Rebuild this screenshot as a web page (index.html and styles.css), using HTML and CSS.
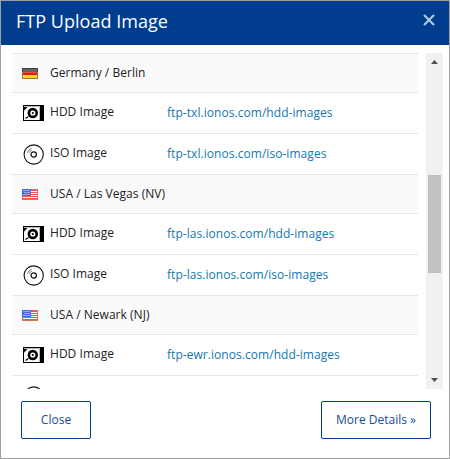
FILE: index.html
```html
<!DOCTYPE html>
<html lang="en">
<head>
<meta charset="utf-8">
<title>FTP Upload Image</title>
<link rel="stylesheet" href="styles.css">
</head>
<body>
<svg class="defs" aria-hidden="true">
  <symbol id="hdd" viewBox="0 0 21 16">
    <rect width="21" height="16" fill="#000"/>
    <path d="M5.5 1H17V15H1V5.5Z" fill="#fff"/>
    <path d="M16.5 1V15M1 1.5H17" stroke="#bbb"/>
    <circle cx="9.8" cy="8" r="3.9" fill="#fff" stroke="#000" stroke-width="2.6"/>
    <circle cx="9.8" cy="8" r="1.1" fill="#000"/>
    <path d="M2.5 13.5 5.5 11.5" stroke="#000" stroke-width="1.2"/>
  </symbol>
  <symbol id="iso" viewBox="0 0 21 21">
    <g fill="none" stroke="#111">
      <circle cx="10.7" cy="10.5" r="9.6" stroke-width="1.1"/>
      <circle cx="10.7" cy="10.5" r="2.7" stroke-width="1.2"/>
      <path d="M4.3 8.8A6.6 6.6 0 0 1 8.6 4.4M6.2 8.8A5 5 0 0 1 8.8 6.2" stroke="#777" stroke-width="1"/>
    </g>
  </symbol>
  <symbol id="de" viewBox="0 0 16 11">
    <rect width="16" height="11" fill="#9c7732"/>
    <path d="M0 0H16V4H0Z" fill="#4a3b36"/>
    <path d="M1 1H15V4H1Z" fill="#666"/>
    <path d="M1 4H15V7H1Z" fill="#e01c1c"/>
    <path d="M1 4H15V5H1Z" fill="#ee4a40"/>
    <path d="M1 7H15V10H1Z" fill="#ffd22c"/>
  </symbol>
  <symbol id="us" viewBox="0 0 16 11">
    <rect width="16" height="11" fill="#d9705c"/>
    <path d="M1 1H15V10H1Z" fill="#fff"/>
    <path d="M9 1.5H15M9 3.5H15M9 5.5H15M1 7.5H15M1 9.5H15" stroke="#f4524a"/>
    <path d="M0 0H9V7H0Z" fill="#3f6fe0"/>
    <path d="M1.5 1.5H8M2.5 3.5H8M1.5 5.5H8" stroke="#dce6ff" stroke-dasharray="1 1"/>
  </symbol>
</svg>
<div class="dialog">
  <header class="dialog-header">
    <h1 class="title">FTP Upload Image</h1>
    <svg class="close-icon" viewBox="0 0 12 12"><path d="M1 1 11 11M11 1 1 11"/></svg>
  </header>
  <div class="body">
    <div class="list">
      <div class="section"><svg class="flag"><use href="#de"/></svg><span>Germany / Berlin</span></div>
      <div class="row"><svg class="hdd"><use href="#hdd"/></svg><span class="name">HDD Image</span><a class="link">ftp-txl.ionos.com/hdd-images</a></div>
      <div class="row"><svg class="iso"><use href="#iso"/></svg><span class="name">ISO Image</span><a class="link">ftp-txl.ionos.com/iso-images</a></div>
      <div class="section"><svg class="flag"><use href="#us"/></svg><span>USA / Las Vegas (NV)</span></div>
      <div class="row"><svg class="hdd"><use href="#hdd"/></svg><span class="name">HDD Image</span><a class="link">ftp-las.ionos.com/hdd-images</a></div>
      <div class="row"><svg class="iso"><use href="#iso"/></svg><span class="name">ISO Image</span><a class="link">ftp-las.ionos.com/iso-images</a></div>
      <div class="section"><svg class="flag"><use href="#us"/></svg><span>USA / Newark (NJ)</span></div>
      <div class="row"><svg class="hdd"><use href="#hdd"/></svg><span class="name">HDD Image</span><a class="link">ftp-ewr.ionos.com/hdd-images</a></div>
      <div class="row"><svg class="iso"><use href="#iso"/></svg></div>
    </div>
    <div class="scrollbar">
      <svg class="arrow" viewBox="0 0 7 4"><path d="M0 4 3.5 0 7 4Z"/></svg>
      <div class="thumb"></div>
      <svg class="arrow down" viewBox="0 0 7 4"><path d="M0 0 3.5 4 7 0Z"/></svg>
    </div>
  </div>
  <footer class="footer">
    <button class="button">Close</button>
    <button class="button wide">More Details »</button>
  </footer>
</div>
</body>
</html>
```
FILE: styles.css
```css
* { box-sizing: border-box; }
body { margin: 0; font: 12px/18px "Open Sans", sans-serif; letter-spacing: 0.03px; color: #222; }
.defs { display: none; }
.dialog { width: 450px; height: 459px; border: 1px solid #a0a0a0; background: #fff; overflow: hidden; }
.dialog-header { height: 44px; background: #003d8f; display: flex; justify-content: space-between; padding: 0 14px 0 15px; }
.title { margin: 0; font-size: 18px; line-height: 40px; font-weight: 400; color: #fff; }
.close-icon { width: 12px; height: 12px; margin-top: 13px; fill: none; stroke: #b5cbe6; stroke-width: 2; }
.body { display: flex; justify-content: space-between; height: 336px; margin: 8px 6px 0 11px; }
.list { width: 406px; overflow: hidden; border-top: 1px solid #e6e6e6; }
.section { display: flex; align-items: center; height: 39px; padding-left: 10px; gap: 12px; background: #fafafa; border-bottom: 1px solid #e6e6e6; }
.row { display: flex; align-items: center; height: 41px; padding-left: 11px; border-bottom: 1px solid #e6e6e6; }
.flag { width: 16px; height: 11px; }
.hdd { width: 21px; height: 16px; }
.iso { width: 21px; height: 21px; }
.name { width: 117px; margin: 0 0 2px 6px; }
.link { color: #1278b4; letter-spacing: 0.05px; }
.scrollbar { width: 17px; background: #f1f1f1; display: flex; flex-direction: column; align-items: center; padding: 7px 0; }
.arrow { width: 7px; height: 4px; fill: #505050; }
.thumb { width: 13px; height: 98px; margin-top: 111px; background: #c1c1c1; }
.down { margin-top: auto; }
.footer { display: flex; justify-content: space-between; padding: 12px 18px 0 20px; }
.button { width: 70px; height: 38px; padding: 0; border: 1px solid #003d8f; border-radius: 2px; background: #fff; color: #174c97; font: inherit; }
.wide { width: 110px; }
```
